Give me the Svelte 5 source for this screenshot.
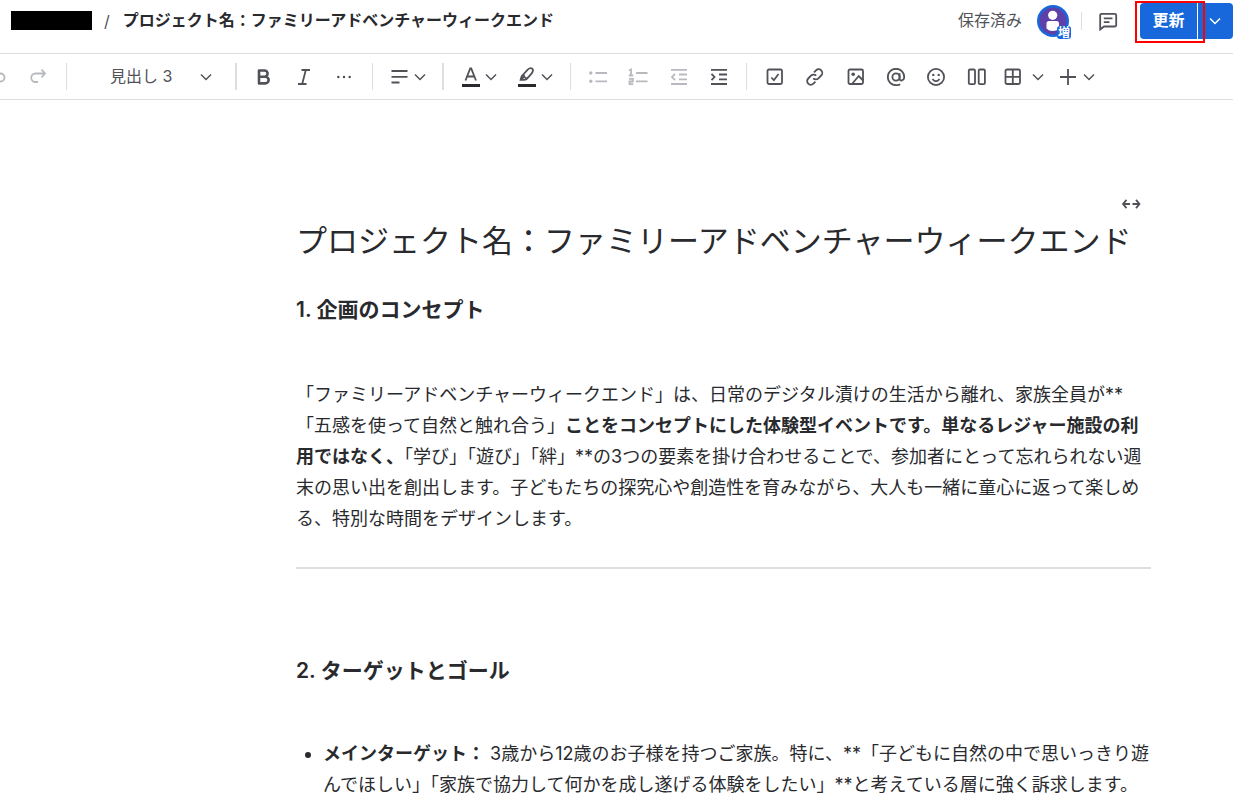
<script>
  const title = 'プロジェクト名：ファミリーアドベンチャーウィークエンド';
  const styles = ['標準テキスト', '見出し 1', '見出し 2', '見出し 3', '見出し 4'];
  let current = $state('見出し 3');
</script>

{#snippet chevron()}
  <svg class="chev" width="12" height="12" viewBox="0 0 12 12" aria-hidden="true"><path d="M1 3.500 6 8.500l5-5" /></svg>
{/snippet}

<div class="page" lang="ja">
  <header>
    <nav aria-label="パンくずリスト">
      <span class="redacted"></span>
      <span class="slash">/</span>
      <strong>{title}</strong>
    </nav>
    <div class="actions">
      <span class="saved">保存済み</span>
      <button class="avatar" aria-label="プロフィール">
        <svg width="32" height="32" viewBox="0 0 32 32"><g class="dots"><circle cx="16" cy="16" r="16" fill="#1868db" /><circle cx="16" cy="16" r="13.500" fill="#5e40aa" /><circle cx="15.700" cy="10.300" r="4.600" fill="#fff" /><path d="M9.500 23.500V18.500a2.500 2.500 0 0 1 2.500-2.500h7.500a2.500 2.500 0 0 1 2.500 2.500v5q-2.500 2.500-6.300 2.500T9.500 23.500z" fill="#fff" /></g></svg>
        <span class="badge">増</span>
      </button>
      <span class="rule short"></span>
      <button class="comment" aria-label="コメント">
        <svg width="20" height="20" viewBox="0 0 20 20"><path d="M3.700 2.800h13a1.500 1.500 0 0 1 1.500 1.500v9.700a1.500 1.500 0 0 1-1.500 1.500H6L2.200 18.500V4.300A1.500 1.500 0 0 1 3.700 2.800zM5.800 7.300h8.700M5.800 11.200h5.700" /></svg>
      </button>
      <div class="split">
        <button class="primary">更新</button>
        <button class="primary more" aria-label="その他の公開オプション">{@render chevron()}</button>
        <span class="highlight"></span>
      </div>
    </div>
  </header>

  <div class="toolbar" role="toolbar" aria-label="編集ツール">
    <div class="group history">
      <button disabled aria-label="元に戻す"><svg width="18" height="18" viewBox="0 0 18 18"><path d="M5.500 2 2 5.500 5.500 9M2 5.500h9.500a4 4 0 0 1 0 8H9" /></svg></button>
      <button disabled aria-label="やり直す"><svg width="18" height="18" viewBox="0 0 18 18"><path d="M12.500 1.500 16 5.500l-3.500 4M16 5.500H6.500a4 4 0 0 0 0 8.500H9" /></svg></button>
    </div>
    <span class="rule"></span>
    <label class="style">
      <select bind:value={current} aria-label="テキストスタイル">
        {#each styles as s}<option>{s}</option>{/each}
      </select>
      {@render chevron()}
    </label>
    <span class="rule thick"></span>
    <div class="group three">
      <button aria-label="太字"><svg width="18" height="18" viewBox="0 0 18 18"><path class="heavy" d="M4 2.500h5.500a3.100 3.100 0 0 1 0 6.200H4zM4 8.700h6.300a3.300 3.300 0 0 1 0 6.700H4z" /></svg></button>
      <button aria-label="斜体"><svg width="18" height="18" viewBox="0 0 18 18"><path d="M6.500 2H15M3 16h8.500M10.800 2 7.200 16" /></svg></button>
      <button aria-label="その他の書式"><svg width="18" height="18" viewBox="0 0 18 18"><g class="dots"><circle cx="3.300" cy="9" r="1.250" /><circle cx="9" cy="9" r="1.250" /><circle cx="14.700" cy="9" r="1.250" /></g></svg></button>
    </div>
    <span class="rule"></span>
    <button class="menu align" aria-label="配置"><svg width="18" height="18" viewBox="0 0 18 18"><path d="M.5 3h16M.5 8.800h16M.5 14.500h8" /></svg>{@render chevron()}</button>
    <span class="rule thick"></span>
    <div class="group colors">
      <button class="menu" aria-label="文字の色"><svg width="18" height="20" viewBox="0 0 18 20"><path d="M3.500 13.500 8.200 1.500h1L14 13.500M5.200 9.500h7.200" /><path class="bar" d="M0 18.500h18" /></svg>{@render chevron()}</button>
      <button class="menu" aria-label="ハイライト"><svg width="18" height="20" viewBox="0 0 18 20"><path d="m4.800 8 4.900-5.300q2.800-2.500 4.500-1t-.5 4.700L9 11.600c-1.300 1.500-3.800 1.200-6.400 1.300.5-1.800.6-3.800 2.200-4.900zM5.500 7.500c.3 2.200 1.500 3.400 3.500 4M2.600 12.900l3.500-3.200" /><path class="bar" d="M0 18.500h18" /></svg>{@render chevron()}</button>
    </div>
    <span class="rule"></span>
    <div class="group four">
      <button disabled aria-label="箇条書き"><svg width="18" height="18" viewBox="0 0 18 18"><path d="M6.500 5H18M6.500 13.300H18" /><g class="dots"><circle cx="1.800" cy="5" r="1.700" /><circle cx="1.800" cy="13.300" r="1.700" /></g></svg></button>
      <button disabled aria-label="番号付きリスト"><svg width="20" height="18" viewBox="0 0 20 18"><path d="M8 5h11.500M8 13.300h11.500M1 2.500l2-1V7.500M.8 7.500h4.400M1 10.800h3.800v2.700H1.500v2.700H5.300" /></svg></button>
      <button disabled aria-label="インデント解除"><svg width="18" height="18" viewBox="0 0 18 18"><path d="M1 1.800h16M9 6.500h8M9 11.300h8M1 16h16M5 5.800 2 9l3 3.200" /></svg></button>
      <button aria-label="インデント"><svg width="18" height="18" viewBox="0 0 18 18"><path d="M1 1.800h16M9 6.500h8M9 11.300h8M1 16h16M1.500 5.800 4.500 9l-3 3.200" /></svg></button>
    </div>
    <span class="rule"></span>
    <div class="group six">
      <button aria-label="アクションアイテム"><svg width="18" height="18" viewBox="0 0 18 18"><rect x="1.500" y="1.500" width="14.500" height="14.500" rx="1.500" /><path d="m5.300 9.500 2.600 2.700L12.500 6" /></svg></button>
      <button aria-label="リンク"><svg width="18" height="18" viewBox="0 0 18 18"><path d="m8 4.300 2-2a3.600 3.600 0 0 1 5.200 5.200l-2.800 2.800a3.600 3.600 0 0 1-5.200 0M9.400 13.700l-2 2a3.600 3.600 0 0 1-5.200-5.200L5 7.700a3.600 3.600 0 0 1 5.200 0" /></svg></button>
      <button aria-label="画像"><svg width="18" height="18" viewBox="0 0 18 18"><rect x="1.500" y="1.500" width="14.500" height="14.500" rx="1.500" /><path d="m5 16 6.700-8 4.500 4.500" /><g class="dots"><circle cx="6.200" cy="6.200" r="1.800" /></g></svg></button>
      <button aria-label="メンション"><svg width="18" height="18" viewBox="0 0 18 18"><circle cx="9" cy="9" r="3.600" /><path d="M12.600 5.200v5.500c0 2.800 4.600 2.400 4.600-1.700A8.200 8.200 0 1 0 9 17.200q2.300 0 4.200-1" /></svg></button>
      <button aria-label="絵文字"><svg width="18" height="18" viewBox="0 0 18 18"><circle cx="9" cy="9" r="8.100" /><path d="M5.500 11q3.500 4.500 7 0" /><g class="dots"><circle cx="6.300" cy="6.900" r="1.200" /><circle cx="11.700" cy="6.900" r="1.200" /></g></svg></button>
      <button aria-label="レイアウト"><svg width="20" height="18" viewBox="0 0 20 18"><rect x="1.800" y="1.500" width="6.200" height="14.700" rx="1.200" /><rect x="11.700" y="1.500" width="6.200" height="14.700" rx="1.200" /></svg></button>
    </div>
    <div class="group inserts">
      <button class="menu" aria-label="表"><svg width="18" height="18" viewBox="0 0 18 18"><rect x="1.500" y="1.500" width="14.500" height="14.500" rx="1.500" /><path d="M8.800 2v14M2 8.800h14" /></svg>{@render chevron()}</button>
      <button class="menu plus" aria-label="要素を挿入"><svg width="18" height="18" viewBox="0 0 18 18"><path d="M9 1v16M1 9h16" /></svg>{@render chevron()}</button>
    </div>
  </div>

  <main>
    <div class="width-row">
      <button aria-label="ページ幅"><svg width="20" height="12" viewBox="0 0 20 12"><path d="M5.500 1.800 2 6l3.500 4.200M2 6h7M15 1.800 18.500 6 15 10.200M18.500 6h-7" /></svg></button>
    </div>
    <h1>{title}</h1>
    <h3>1. 企画のコンセプト</h3>
    <p>「ファミリーアドベンチャーウィークエンド」は、日常のデジタル漬けの生活から離れ、家族全員が**「五感を使って自然と触れ合う」<strong>ことをコンセプトにした体験型イベントです。単なるレジャー施設の利用ではなく、</strong>「学び」「遊び」「絆」**の3つの要素を掛け合わせることで、参加者にとって忘れられない週末の思い出を創出します。子どもたちの探究心や創造性を育みながら、大人も一緒に童心に返って楽しめる、特別な時間をデザインします。</p>
    <hr />
    <h3>2. ターゲットとゴール</h3>
    <ul>
      <li><strong>メインターゲット：</strong> 3歳から12歳のお子様を持つご家族。特に、**「子どもに自然の中で思いっきり遊んでほしい」「家族で協力して何かを成し遂げる体験をしたい」**と考えている層に強く訴求します。</li>
    </ul>
  </main>
</div>

<style>
  :global(body) { background: #fff; overflow-x: hidden; }
  .page { font-family: Inter, 'Noto Sans CJK JP', sans-serif; color: #292a2e; }
  button { border: 0; padding: 0; background: none; color: #505258; font: inherit; display: flex; align-items: center; justify-content: center; }
  button:disabled { color: #b7b9be; }
  svg { flex: none; fill: none; stroke: currentColor; stroke-width: 1.8; display: block; }
  .chev { stroke-width: 1.5; color: #505258; }
  .heavy { stroke-width: 2.6; stroke-linejoin: round; }
  .dots { fill: currentColor; stroke: none; }
  .bar { stroke: #292a2e; stroke-width: 3; }

  header { display: flex; justify-content: space-between; border-bottom: 1px solid #dddee1; height: 53px; font-size: 16px; }
  nav { display: flex; align-items: center; height: 41px; padding-left: 11px; white-space: nowrap; }
  .redacted { width: 81px; height: 19px; background: #000; }
  .slash { margin: 0 13px 0 12px; color: #505258; }
  nav strong { font-weight: 600; padding-bottom: 3px; }
  .actions { display: flex; align-items: center; height: 42px; white-space: nowrap; }
  .saved { color: #505258; margin-right: 15px; padding-bottom: 4px; }
  .avatar { position: relative; }
  .badge { position: absolute; right: -2px; bottom: -2px; width: 14px; height: 13px; border-radius: 3px; background: #1868db; color: #fff; font-size: 12px; font-weight: 700; line-height: 13px; text-align: center; }
  .comment { margin: 0 22px 0 16px; }
  .split { position: relative; display: flex; gap: 1px; }
  .primary { width: 57px; height: 36px; padding-bottom: 4px; background: #1868db; color: #fff; font-weight: 600; border-radius: 4px 0 0 4px; }
  .more { width: 35px; padding: 0 2px 0 0; border-radius: 0 4px 4px 0; }
  .more :global(.chev) { color: #fff; }
  .highlight { position: absolute; left: -5px; top: -2px; width: 66px; height: 38px; border: 2px solid #f00; pointer-events: none; }

  .rule { flex: none; width: 1px; height: 27px; margin: 0 8px; background: #dddee1; }
  .thick { width: 2px; margin: 0 7px; }
  .short { height: 18px; margin: 0 0 0 12px; }
  .toolbar { display: flex; align-items: center; height: 45px; border-bottom: 1px solid #dddee1; overflow: hidden; }
  .group { flex: none; display: flex; }
  .group > button { flex: 1; height: 32px; }
  .history { width: 80px; margin-left: -22px; }
  .style { display: flex; align-items: center; margin: 0 16px 0 35px; }
  select { appearance: none; border: 0; padding: 0 0 2px; width: 90px; background: none; color: #505258; font: 16px/24px Inter, 'Noto Sans CJK JP', sans-serif; }
  .three { width: 120px; }
  .four { width: 161px; margin: 0 -1px; }
  .six { width: 242px; }
  .menu { gap: 5px; }
  .align { margin: 0 9px 0 10px; }
  .colors { gap: 21px; padding: 0 9px 0 11px; }
  .inserts { gap: 15px; padding-left: 7px; }
  .inserts .menu { gap: 10px; }
  .inserts .plus { gap: 6px; }

  main { padding: 96px 82px 0 296px; font-size: 18px; line-height: 31px; height: 600px; }
  main { height: auto; }
  .width-row { display: flex; justify-content: flex-end; padding-right: 10px; }
  .width-row button { height: 16px; }
  h1 { margin: 9px 0 0; font-size: 31px; line-height: 40px; font-weight: 400; white-space: nowrap; }
  h3 { margin: 37px 0 0; font-size: 21px; line-height: 24px; font-weight: 600; }
  p { margin: 57px 0 0; }
  strong { font-weight: 700; }
  hr { margin: 33px 0 0; border: 0; height: 2px; background: #dddee1; }
  hr + h3 { margin-top: 90px; }
  ul { margin: 55px 0 0; padding-left: 27px; }
</style>
